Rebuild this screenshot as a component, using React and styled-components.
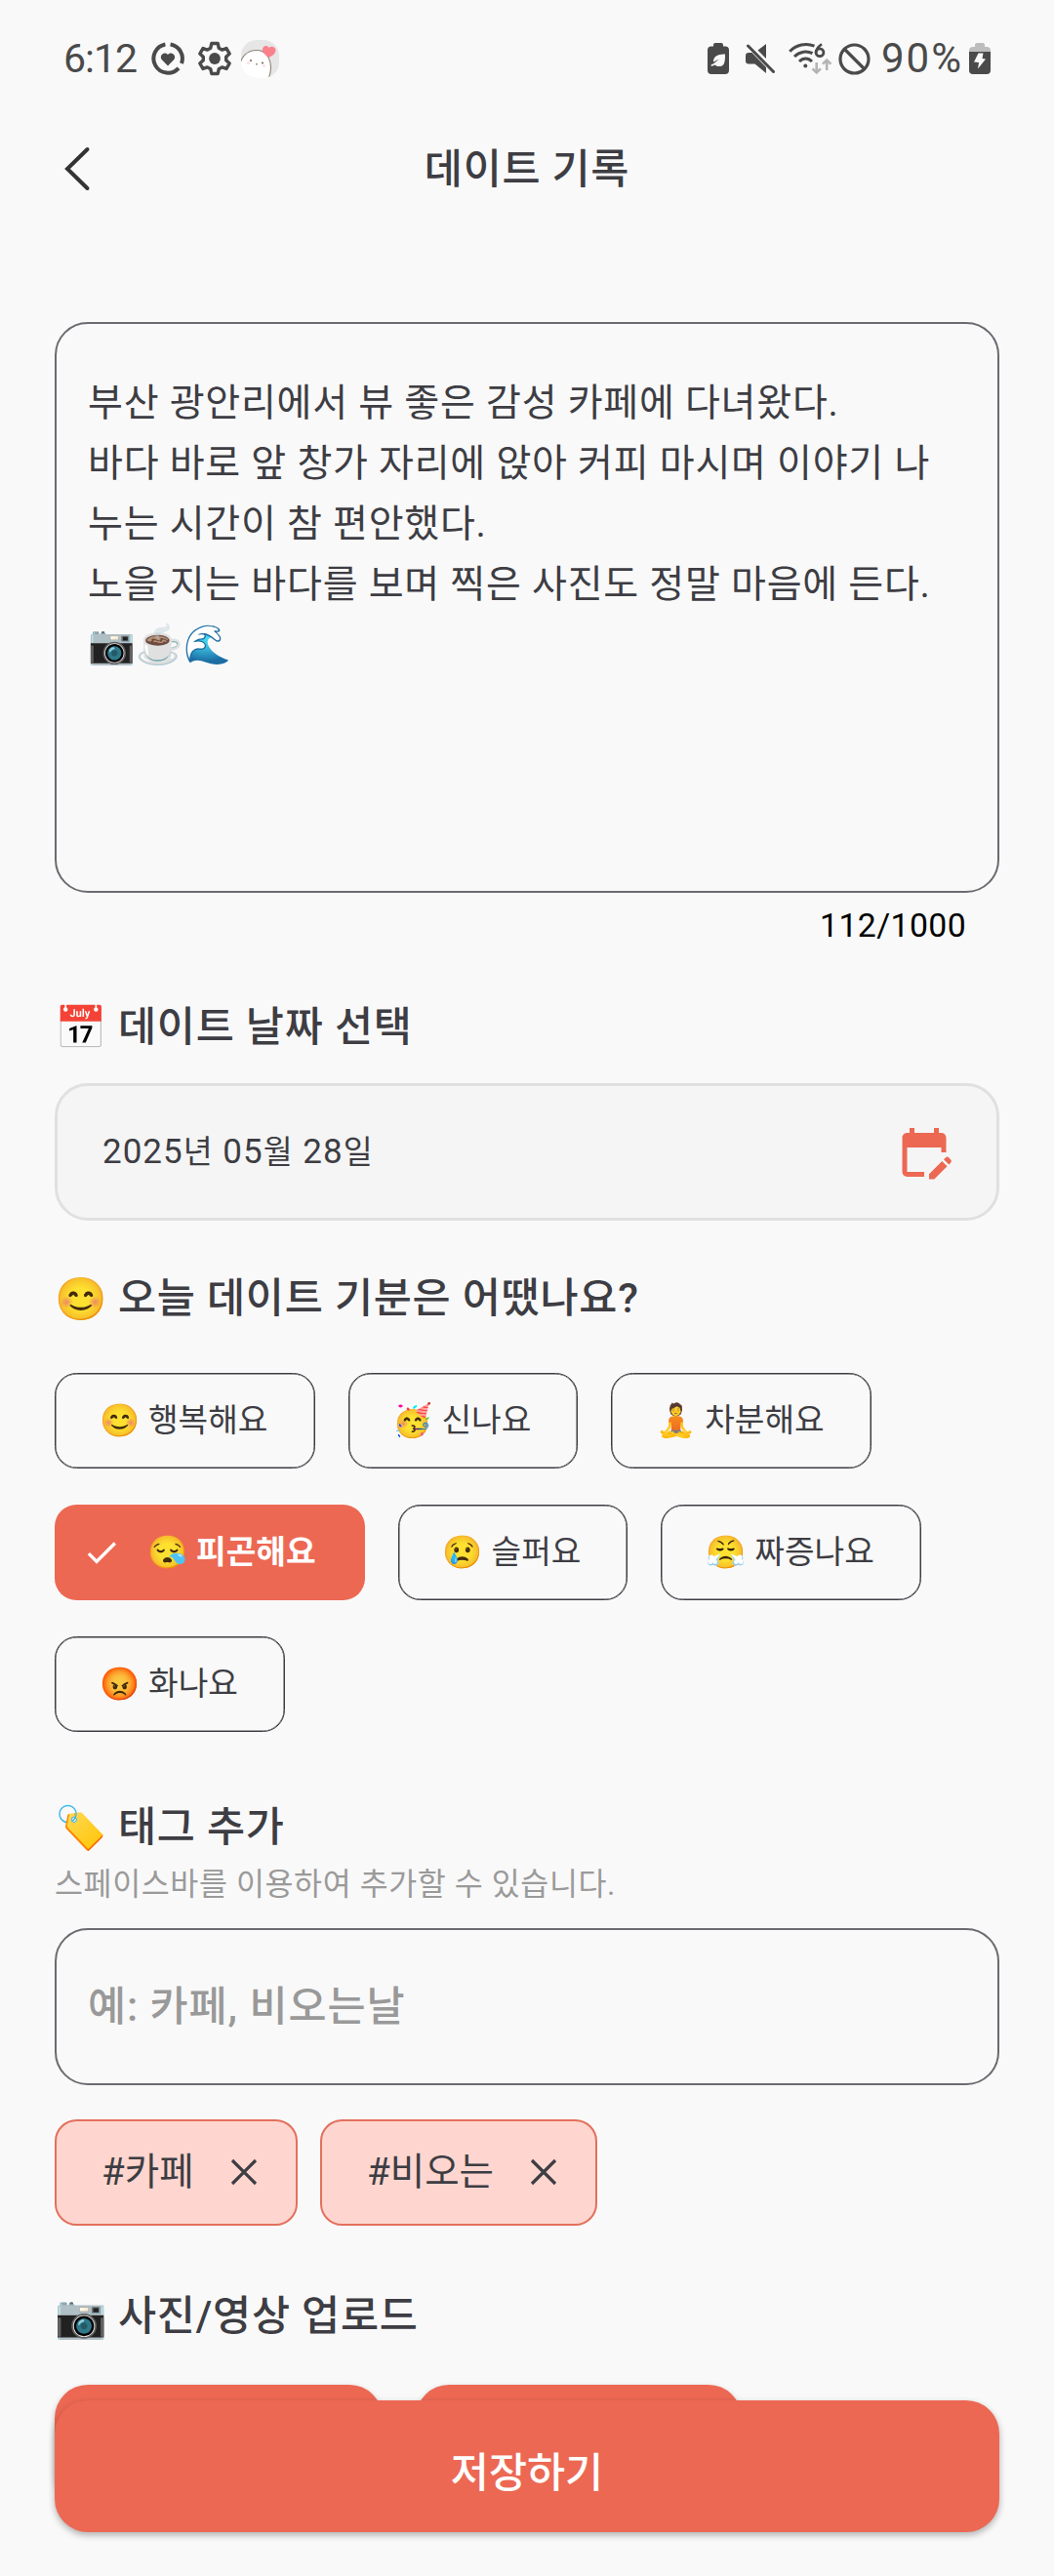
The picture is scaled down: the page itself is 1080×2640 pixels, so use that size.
import React from "react";
import styled, { createGlobalStyle, css } from "styled-components";
import { MdEditCalendar, MdCheck } from "react-icons/md";

const coral = "#ec6853";
const ink = "#3d3d43";

const GlobalStyle = createGlobalStyle`
  * { box-sizing: border-box; }
  body {
    margin: 0;
    background: #f9f9f9;
    color: ${ink};
    font-family: Roboto, "Noto Sans CJK KR", "Noto Color Emoji", sans-serif;
  }
`;

const Screen = styled.div`
  position: relative;
  width: 1080px;
  height: 2640px;
  overflow: hidden;
  background: #f9f9f9;
  display: flex;
  flex-direction: column;
`;

const StatusBar = styled.header`
  height: 120px;
  padding: 0 65px 0 65px;
  display: flex;
  justify-content: space-between;
  align-items: center;
  color: #4a4a4a;
`;

const StatusGroup = styled.div`
  display: flex;
  align-items: center;
  svg { display: block; flex: none; }
`;

const StatusText = styled.span`
  font-size: ${(p) => p.$size || 41}px;
  line-height: 48px;
  letter-spacing: ${(p) => p.$spacing || "0"};
  width: ${(p) => p.$width};
  white-space: nowrap;
`;

const StatusGap = styled.i`
  width: ${(p) => p.$width}px;
`;

const TopBar = styled.nav`
  height: 106px;
  display: grid;
  grid-template-columns: 160px 1fr 160px;
  align-items: center;
`;

const BackButton = styled.button`
  border: 0;
  background: none;
  padding: 0 0 0 65px;
  display: flex;
`;

const PageTitle = styled.h1`
  margin: 0;
  padding-top: 1px;
  text-align: center;
  font-size: 42.5px;
  font-weight: 500;
  line-height: 60px;
  letter-spacing: 0.7px;
`;

const Content = styled.main`
  padding: 104px 56px 0;
  display: flex;
  flex-direction: column;
`;

const NoteBox = styled.div`
  height: 585px;
  border: 2px solid #6b6b71;
  border-radius: 34px;
  padding: 50px 32px;
  font-size: 39px;
  line-height: 62px;
  letter-spacing: 0.75px;
  white-space: pre;
`;

const Counter = styled.div`
  height: 34px;
  margin: 17px 34px 0;
  text-align: right;
  font-size: 33.75px;
  line-height: 34px;
  letter-spacing: 0.4px;
  color: #000;
`;

const SectionTitle = styled.h2`
  margin: ${(p) => p.$top}px 0 0;
  height: 60px;
  display: flex;
  align-items: center;
  gap: 11px;
  font-size: 42.5px;
  font-weight: 500;
  line-height: 60px;
  letter-spacing: 0.75px;
  white-space: nowrap;
`;

const Emoji = styled.span`
  font-family: "Noto Color Emoji", sans-serif;
  font-weight: 400;
  font-size: ${(p) => p.$size}px;
  letter-spacing: 0;
  width: ${(p) => p.$width}px;
  display: inline-flex;
  justify-content: center;
  ${(p) => p.$vivid && "filter: saturate(2.6);"}
`;

const DateField = styled.div`
  margin-top: 27px;
  height: 141px;
  border: 3px solid #e0e0e0;
  border-radius: 34px;
  background: #f5f5f5;
  padding: 0 44px 0 46px;
  display: flex;
  justify-content: space-between;
  align-items: center;
  font-size: 35px;
  letter-spacing: 1px;
  line-height: 50px;
  color: ${ink};
`;

const Hangul = styled.span`
  font-size: 0.93em;
`;

const Moods = styled.div`
  margin-top: 46px;
  display: flex;
  flex-wrap: wrap;
  gap: 37px 34px;
`;

const MoodChip = styled.button`
  height: 98px;
  width: ${(p) => p.$width}px;
  border: 1px solid ${ink};
  box-shadow: inset 0 0 0 0.5px ${ink};
  border-radius: 22.5px;
  background: none;
  padding: 0 2px 0 0;
  display: flex;
  justify-content: center;
  align-items: center;
  gap: 9px;
  font-family: inherit;
  font-size: 33.3px;
  line-height: 50px;
  color: ${ink};
  white-space: nowrap;
  ${(p) =>
    p.$selected &&
    css`
      border: 0;
      box-shadow: none;
      background: ${coral};
      color: #fff;
      font-weight: 700;
      svg { margin: 0 18px 0 -20px; }
    `}
`;

const Hint = styled.p`
  margin: 8px 0 0;
  height: 42px;
  font-size: 31.5px;
  line-height: 42px;
  letter-spacing: 0.6px;
  color: #9a9a9a;
  white-space: nowrap;
`;

const TagInput = styled.div`
  margin-top: 23px;
  height: 161px;
  border: 2px solid #6b6b71;
  border-radius: 34px;
  padding: 0 32px;
  display: flex;
  align-items: center;
  font-size: 42.5px;
  font-weight: 500;
  line-height: 60px;
  letter-spacing: 0.9px;
  color: #999;
`;

const Tags = styled.div`
  margin-top: 35px;
  display: flex;
  gap: 23px;
`;

const Tag = styled.span`
  height: 109px;
  width: ${(p) => p.$width}px;
  border: 2px solid #e3705d;
  border-radius: 22.5px;
  background: #fed6cf;
  padding: 0 39px 2px 46px;
  display: flex;
  justify-content: space-between;
  align-items: center;
  font-size: 38.5px;
  line-height: 56px;
  white-space: nowrap;
`;

const UploadRow = styled.div`
  margin-top: 40px;
  display: flex;
  gap: 34px;
`;

const UploadButton = styled.button`
  width: ${(p) => p.$width}px;
  height: 124px;
  border: 0;
  border-radius: 34px;
  background: ${coral};
  box-shadow: 0 3px 6px rgba(0, 0, 0, 0.25);
`;

const SaveButton = styled.button`
  position: absolute;
  left: 56px;
  right: 56px;
  bottom: 45px;
  height: 135px;
  border: 0;
  border-radius: 34px;
  background: ${coral};
  box-shadow: 0 3px 7px rgba(0, 0, 0, 0.3);
  padding: 14px 0 0;
  color: #fff;
  font-family: inherit;
  font-size: 42.5px;
  font-weight: 500;
  line-height: 60px;
`;

const RingIcon = () => (
  <svg width="34" height="34" viewBox="0 0 34 34">
    <g fill="none" stroke="#4a4a4a" strokeWidth="4">
      <path d="M14.4 2.5A14.7 14.7 0 1 0 28 26.8" />
      <path d="M19.6 2.5A14.7 14.7 0 0 1 31 22" />
    </g>
    <path d="M17 24.5 10.9 18.2C7.6 14.5 12.8 8.6 17 13c4.2-4.4 9.4 1.5 6.1 5.2z" fill="#4a4a4a" />
  </svg>
);

const GearIcon = () => (
  <svg width="36" height="36" viewBox="0 0 36 36">
    <path
      d="M14.8 2.5h6.4l1 4.7 3.3 1.9 4.5-1.5 3.2 5.5-3.5 3.2v3.4l3.5 3.2-3.2 5.5-4.5-1.5-3.3 1.9-1 4.7h-6.4l-1-4.7-3.3-1.9-4.5 1.5-3.2-5.5 3.5-3.2v-3.4l-3.5-3.2 3.2-5.5 4.5 1.5 3.3-1.9z"
      fill="none"
      stroke="#4a4a4a"
      strokeWidth="3.4"
      strokeLinejoin="round"
    />
    <circle cx="18" cy="18" r="5.9" fill="#4a4a4a" />
  </svg>
);

const AvatarIcon = () => (
  <svg width="39" height="39" viewBox="0 0 39 39">
    <defs>
      <clipPath id="avatar">
        <rect width="39" height="39" rx="16" />
      </clipPath>
    </defs>
    <g clipPath="url(#avatar)">
      <rect width="39" height="39" fill="#e6e6e6" />
      <path d="M-1 24C2 14 9 10.500 16 10.500c9 0 14.500 8 14.500 18 0 5-1 8-2.500 12H-1z" fill="#fff" stroke="#8d8072" strokeWidth="1.1" />
      <circle cx="10" cy="21" r="1.1" fill="#7b6a50" />
      <circle cx="22" cy="23.5" r="1.1" fill="#7b6a50" />
      <path d="M14.8 24.2h2.4L16 26z" fill="#7b6a50" />
      <circle cx="7.5" cy="23.5" r="1.5" fill="#fde0e4" />
      <circle cx="23.5" cy="26.5" r="1.5" fill="#fde0e4" />
      <path d="M28 18c-2-3-7-5-6-9 1-3.5 5-4 6.500-1 2-2 6-1.500 6.800 1.500 1 4-4 7.500-7.300 8.500z" fill="#f9818b" />
    </g>
  </svg>
);

const LeafBatteryIcon = () => (
  <svg width="22" height="32" viewBox="0 0 22 32">
    <path d="M6 3.500V2a2 2 0 0 1 2-2h6a2 2 0 0 1 2 2v1.500h2a4 4 0 0 1 4 4V28a4 4 0 0 1-4 4H4a4 4 0 0 1-4-4V7.500a4 4 0 0 1 4-4z" fill="#4a4a4a" />
    <path d="M18 11.500c0 8-.5 12-5.500 12.500-2.500.3-4-.5-5-1.500L4 24l-.5-1.500 3-1.500 5.500-4.500-6 3c-.5-5.500 5-8.500 12-8z" fill="#f9f9f9" />
  </svg>
);

const MuteIcon = () => (
  <svg width="30" height="30" viewBox="0 0 30 30">
    <path d="M0 12a3 3 0 0 1 3-3h3.500L21 24v6L9.500 20.500H3a3 3 0 0 1-3-3zM12.500 6.500 21 0v15z" fill="#4a4a4a" />
    <path d="M2.500 2 28.500 28.500" stroke="#4a4a4a" strokeWidth="3" strokeLinecap="round" />
  </svg>
);

const WifiIcon = () => (
  <svg width="45" height="34" viewBox="0 0 45 34">
    <g fill="none" stroke="#4a4a4a" strokeWidth="3">
      <path d="M1.200 9.800C8 2.600 18 .8 26.500 4.200" />
      <path d="M6 15c5.500-5.500 13-6.200 18.500-3.300" />
      <path d="M11 20c4-4 9-4 13 0" />
      <path d="M34 2.200c-3.500 2.500-6 5.500-6 9" strokeWidth="2.600" />
      <circle cx="32" cy="10.700" r="3.900" strokeWidth="2.800" />
    </g>
    <circle cx="17.300" cy="24.500" r="2" fill="#4a4a4a" />
    <g fill="none" stroke="#b4b4b4" strokeWidth="2.600">
      <path d="M28.700 21v10.500M24.500 27.300l4.200 4.200 4.200-4.200M39.200 29V18.500M35 22.700l4.200-4.200 4.200 4.200" />
    </g>
  </svg>
);

const BlockIcon = () => (
  <svg width="33" height="33" viewBox="0 0 33 33">
    <g fill="none" stroke="#4a4a4a" strokeWidth="3.200">
      <circle cx="16.500" cy="16.500" r="14.500" />
      <path d="M6.500 6.500 26.500 26.500" />
    </g>
  </svg>
);

const ChargeIcon = () => (
  <svg width="22" height="32" viewBox="0 0 22 32">
    <path d="M6 4V2a2 2 0 0 1 2-2h6a2 2 0 0 1 2 2v2h2a4 4 0 0 1 4 4v2H0V8a4 4 0 0 1 4-4z" fill="#bdbdbd" />
    <path d="M0 9h22v19a4 4 0 0 1-4 4H4a4 4 0 0 1-4-4z" fill="#4a4a4a" />
    <path d="M9.500 10.500h5l-1 5.500 3.500.5L9 26.500l1-6.500-5-.5z" fill="#f9f9f9" />
  </svg>
);

const CloseIcon = () => (
  <svg width="28" height="28" viewBox="0 0 28 28">
    <path d="M2 2l24 24M26 2 2 26" stroke={ink} strokeWidth="3.200" />
  </svg>
);

const moods = [
  { emoji: "😊", label: "행복해요", width: 266.5 },
  { emoji: "🥳", label: "신나요", width: 235.7 },
  { emoji: "🧘", label: "차분해요", width: 266.5 },
  { emoji: "😪", label: "피곤해요", width: 317.7, selected: true },
  { emoji: "😢", label: "슬퍼요", width: 235.7 },
  { emoji: "😤", label: "짜증나요", width: 266.5 },
  { emoji: "😡", label: "화나요", width: 236 },
];

const tags = [
  { label: "#카페", width: 249 },
  { label: "#비오는", width: 284 },
];

const note = [
  "부산 광안리에서 뷰 좋은 감성 카페에 다녀왔다.",
  "바다 바로 앞 창가 자리에 앉아 커피 마시며 이야기 나",
  "누는 시간이 참 편안했다.",
  "노을 지는 바다를 보며 찍은 사진도 정말 마음에 든다.",
  "📷☕🌊",
];

export default function App() {
  return (
    <Screen>
      <GlobalStyle />
      <StatusBar>
        <StatusGroup>
          <StatusText $width="90px" $spacing="-1px">6:12</StatusText>
          <RingIcon />
          <StatusGap $width={13} />
          <GearIcon />
          <StatusGap $width={9} />
          <AvatarIcon />
        </StatusGroup>
        <StatusGroup>
          <LeafBatteryIcon />
          <StatusGap $width={17} />
          <MuteIcon />
          <StatusGap $width={14} />
          <WifiIcon />
          <StatusGap $width={6} />
          <BlockIcon />
          <StatusGap $width={11} />
          <StatusText $width="90px" $size={42} $spacing="2px">90%</StatusText>
          <ChargeIcon />
        </StatusGroup>
      </StatusBar>

      <TopBar>
        <BackButton aria-label="뒤로">
          <svg width="28" height="46" viewBox="0 0 28 46">
            <path d="M24.500 3 4 23l20.500 20" fill="none" stroke="#333" strokeWidth="4" strokeLinecap="round" />
          </svg>
        </BackButton>
        <PageTitle>데이트 기록</PageTitle>
      </TopBar>

      <Content>
        <NoteBox>
          {note.map((line) => (
            <div key={line}>{line}</div>
          ))}
        </NoteBox>
        <Counter>112/1000</Counter>

        <SectionTitle $top={57}>
          <Emoji $size={43} $width={54}>📅</Emoji>데이트 날짜 선택
        </SectionTitle>
        <DateField>
          <span>
            2025<Hangul>년</Hangul> 05<Hangul>월</Hangul> 28<Hangul>일</Hangul>
          </span>
          <MdEditCalendar size={60} color={coral} />
        </DateField>

        <SectionTitle $top={50}>
          <Emoji $size={43} $width={54}>😊</Emoji>오늘 데이트 기분은 어땠나요?
        </SectionTitle>
        <Moods>
          {moods.map((m) => (
            <MoodChip key={m.label} $width={m.width} $selected={m.selected}>
              {m.selected && <MdCheck size={40} />}
              <Emoji $size={33} $width={41}>{m.emoji}</Emoji>
              {m.label}
            </MoodChip>
          ))}
        </Moods>

        <SectionTitle $top={68}>
          <Emoji $size={43} $width={54} $vivid>🏷️</Emoji>태그 추가
        </SectionTitle>
        <Hint>스페이스바를 이용하여 추가할 수 있습니다.</Hint>
        <TagInput>예: 카페, 비오는날</TagInput>
        <Tags>
          {tags.map((t) => (
            <Tag key={t.label} $width={t.width}>
              {t.label}
              <CloseIcon />
            </Tag>
          ))}
        </Tags>

        <SectionTitle $top={63}>
          <Emoji $size={43} $width={54}>📷</Emoji>사진/영상 업로드
        </SectionTitle>
        <UploadRow>
          <UploadButton $width={336} aria-label="사진" />
          <UploadButton $width={334} aria-label="영상" />
        </UploadRow>
      </Content>

      <SaveButton>저장하기</SaveButton>
    </Screen>
  );
}
